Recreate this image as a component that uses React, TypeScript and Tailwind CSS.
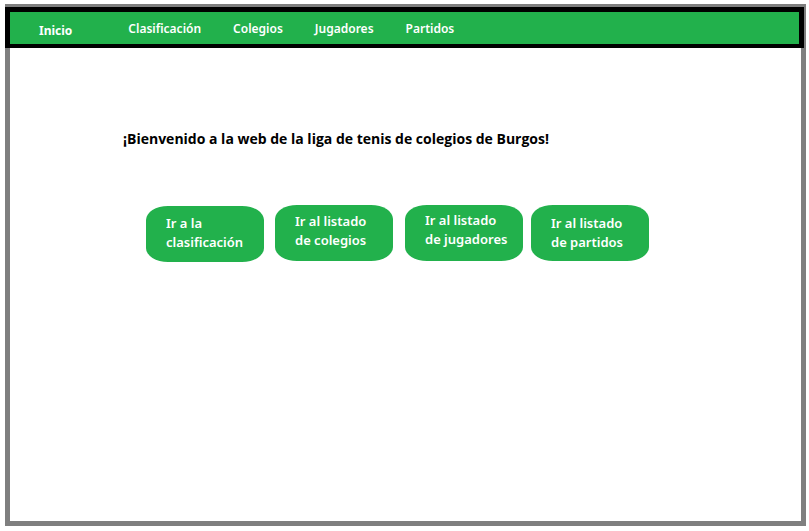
const sections = ["Clasificación", "Colegios", "Jugadores", "Partidos"];

const shortcuts = [
  { first: "Ir a la", second: "clasificación", place: "mr-[11px] mt-px pt-2" },
  { first: "Ir al listado", second: "de colegios", place: "mr-3 pt-[7px]" },
  { first: "Ir al listado", second: "de jugadores", place: "mr-2 pt-[6px]" },
  { first: "Ir al listado", second: "de partidos", place: "pt-[9px]" },
];

export default function App() {
  return (
    <div className="flex min-h-screen bg-white pt-1 pr-[3px] pb-[5px] pl-[5px] font-['Noto_Sans','Open_Sans',sans-serif]">
      <div className="flex-1 border-x-[5px] border-t-[3px] border-b-[5px] border-[#7f7f7f]">
        <header className="-mr-[3px] -ml-[5px] border-[5px] border-b-4 border-black bg-[#22b14c]">
          <nav className="flex h-8 items-center pt-[2px] pl-[29px] text-[12px] leading-5 text-white">
            <a href="#inicio" className="mr-14 pt-[3px] font-bold">
              Inicio
            </a>
            <div className="flex gap-8 font-semibold">
              {sections.map((name) => (
                <a key={name} href={"#" + name.toLowerCase()}>
                  {name}
                </a>
              ))}
            </div>
          </nav>
        </header>
        <main className="pt-[79px]">
          <h1 className="pl-[113px] font-['Open_Sans','Noto_Sans',sans-serif] text-[14px] leading-6 font-bold text-black">
            ¡Bienvenido a la web de la liga de tenis de colegios de Burgos!
          </h1>
          <div className="mt-[54px] flex items-start pl-[136px]">
            {shortcuts.map(({ first, second, place }) => (
              <button
                key={second}
                type="button"
                className={
                  "flex h-14 w-[118px] flex-col items-start rounded-[22px/14px] bg-[#22b14c] pl-5 text-left text-[13px] leading-[19px] font-semibold whitespace-nowrap text-white " +
                  place
                }
              >
                <span>{first}</span>
                <span>{second}</span>
              </button>
            ))}
          </div>
        </main>
      </div>
    </div>
  );
}
